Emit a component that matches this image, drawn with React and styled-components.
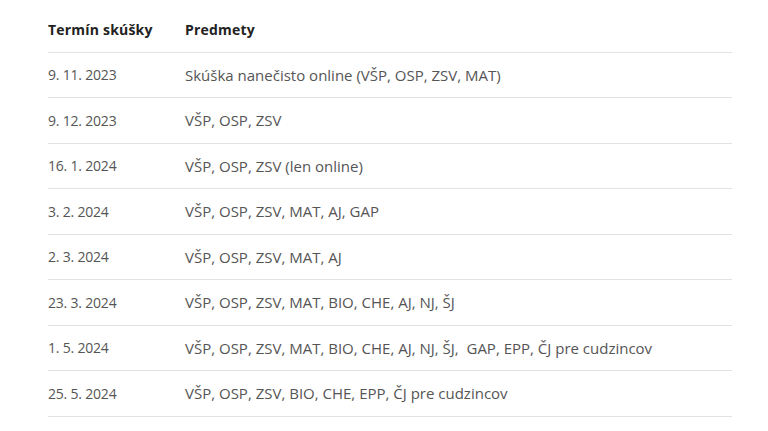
import styled, { createGlobalStyle } from 'styled-components';

const GlobalStyle = createGlobalStyle`
  body {
    margin: 0;
    background: #fff;
    font-family: 'Open Sans', 'Liberation Sans', sans-serif;
  }
`;

const Wrapper = styled.div`
  padding: 7px 36px 0 48px;
`;

const Table = styled.div`
  width: 684px;
`;

const Row = styled.div`
  display: grid;
  grid-template-columns: 137px 1fr;
  align-items: center;
  height: 45.5px;
  border-bottom: 1px solid #e2e2e2;
  box-sizing: border-box;
`;

const HeadCell = styled.div`
  font-size: 14px;
  font-weight: 700;
  letter-spacing: 0.2px;
  color: #222;
`;

const Cell = styled.div`
  font-size: ${(p) => (p.$date ? '14px' : '15px')};
  letter-spacing: ${(p) => (p.$date ? '-0.2px' : '0')};
  color: #555;
  white-space: pre;
`;

const terms = [
  ['9. 11. 2023', 'Skúška nanečisto online (VŠP, OSP, ZSV, MAT)'],
  ['9. 12. 2023', 'VŠP, OSP, ZSV'],
  ['16. 1. 2024', 'VŠP, OSP, ZSV (len online)'],
  ['3. 2. 2024', 'VŠP, OSP, ZSV, MAT, AJ, GAP'],
  ['2. 3. 2024', 'VŠP, OSP, ZSV, MAT, AJ'],
  ['23. 3. 2024', 'VŠP, OSP, ZSV, MAT, BIO, CHE, AJ, NJ, ŠJ'],
  ['1. 5. 2024', 'VŠP, OSP, ZSV, MAT, BIO, CHE, AJ, NJ, ŠJ,  GAP, EPP, ČJ pre cudzincov'],
  ['25. 5. 2024', 'VŠP, OSP, ZSV, BIO, CHE, EPP, ČJ pre cudzincov'],
];

export default function App() {
  return (
    <Wrapper>
      <GlobalStyle />
      <Table>
        <Row>
          <HeadCell>Termín skúšky</HeadCell>
          <HeadCell>Predmety</HeadCell>
        </Row>
        {terms.map(([date, subjects]) => (
          <Row key={date}>
            <Cell $date>{date}</Cell>
            <Cell>{subjects}</Cell>
          </Row>
        ))}
      </Table>
    </Wrapper>
  );
}
